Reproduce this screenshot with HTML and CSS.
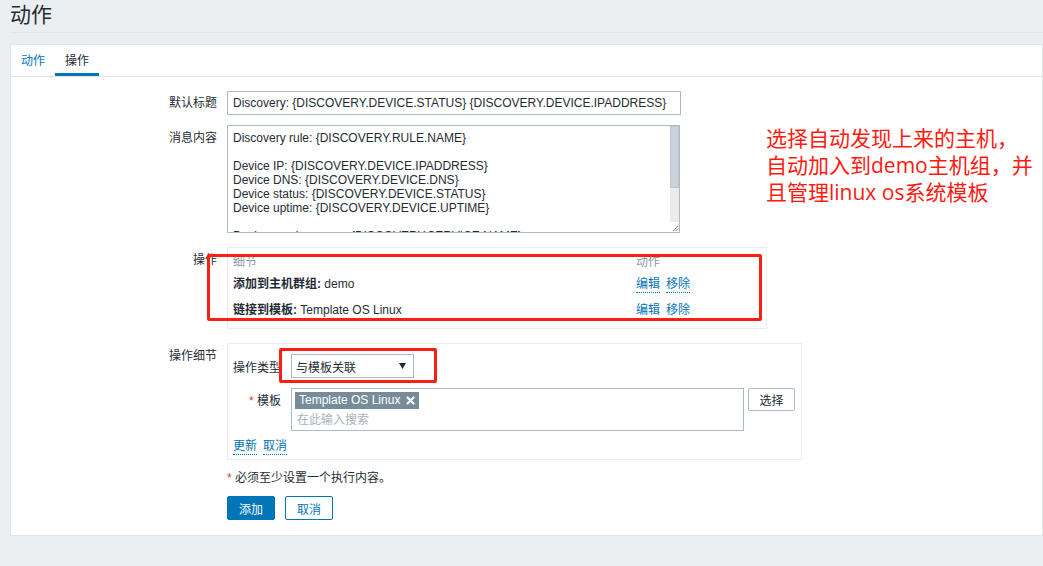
FILE: index.html
```html
<!DOCTYPE html>
<html lang="zh">
<head>
<meta charset="utf-8">
<title>动作</title>
<link rel="stylesheet" href="styles.css">
</head>
<body>
<div class="page">
  <header class="page-header"><h1>动作</h1></header>
  <main class="card">
    <ul class="tabs">
      <li class="tab">动作</li>
      <li class="tab active">操作</li>
    </ul>
    <div class="form">
      <div class="row r1">
        <label class="lbl">默认标题</label>
        <div class="ctl"><input class="text-input" type="text" value="Discovery: {DISCOVERY.DEVICE.STATUS} {DISCOVERY.DEVICE.IPADDRESS}"></div>
      </div>
      <div class="row r2">
        <label class="lbl">消息内容</label>
        <div class="ctl">
          <div class="textarea">
            <textarea class="ta">Discovery rule: {DISCOVERY.RULE.NAME}

Device IP: {DISCOVERY.DEVICE.IPADDRESS}
Device DNS: {DISCOVERY.DEVICE.DNS}
Device status: {DISCOVERY.DEVICE.STATUS}
Device uptime: {DISCOVERY.DEVICE.UPTIME}

Device service name: {DISCOVERY.SERVICE.NAME}</textarea>
            <div class="scrollbar">
              <div class="thumb"></div>
              <div class="track"></div>
              <div class="corner">
                <svg width="7" height="7" viewBox="0 0 7 7"><path d="M6 1 L1 6 M6 3.5 L3.5 6" stroke="#7a7a7a" stroke-width="1" fill="none"/></svg>
              </div>
            </div>
          </div>
        </div>
      </div>
      <div class="row r3">
        <label class="lbl">操作</label>
        <div class="ctl">
          <div class="box ops">
            <div class="ops-head"><span>细节</span><span>动作</span></div>
            <div class="ops-row"><span><b>添加到主机群组:</b> demo</span><span class="acts"><a class="link">编辑</a><a class="link">移除</a></span></div>
            <div class="ops-row"><span><b>链接到模板:</b> Template OS Linux</span><span class="acts"><a class="link">编辑</a><a class="link">移除</a></span></div>
          </div>
        </div>
      </div>
      <div class="row r4">
        <label class="lbl">操作细节</label>
        <div class="ctl">
          <div class="box details">
            <div class="drow drow-type">
              <span class="dlbl">操作类型</span>
              <div class="select"><span class="sel-text">与模板关联</span><svg class="arrow" width="7" height="6" viewBox="0 0 7 6"><polygon points="0,0 7,0 3.5,6" fill="#1f2c33"/></svg></div>
            </div>
            <div class="drow drow-tpl">
              <span class="dlbl"><span class="req">*</span> 模板</span>
              <div class="ms-wrap">
                <div class="multiselect">
                  <span class="tag">Template OS Linux<svg class="tag-x" width="9" height="9" viewBox="0 0 9 9"><path d="M1.5 1.5 L7.5 7.5 M7.5 1.5 L1.5 7.5" stroke="#fff" stroke-width="2.2" stroke-linecap="round"/></svg></span>
                  <span class="placeholder">在此输入搜索</span>
                </div>
                <button class="btn-alt" type="button">选择</button>
              </div>
            </div>
            <div class="dlinks"><a class="link">更新</a><a class="link">取消</a></div>
          </div>
        </div>
      </div>
      <div class="row r5">
        <span class="lbl"></span>
        <div class="ctl note"><span class="req">*</span> 必须至少设置一个执行内容。</div>
      </div>
      <div class="row r6">
        <span class="lbl"></span>
        <div class="ctl buttons">
          <button class="btn-primary" type="button">添加</button>
          <button class="btn-outline" type="button">取消</button>
        </div>
      </div>
    </div>
  </main>
  <div class="mark mark-ops"></div>
  <div class="mark mark-type"></div>
  <div class="annotation">
    <span class="aline">选择自动发现上来的主机，</span>
    <span class="aline">自动加入到demo主机组，并</span>
    <span class="aline">且管理linux os系统模板</span>
  </div>
</div>
</body>
</html>
```

FILE: styles.css
```css
* { box-sizing: border-box; }
html, body { margin: 0; padding: 0; }
body {
  background: #ebeef0;
  font-family: "Liberation Sans", "Noto Sans CJK SC", sans-serif;
  font-size: 12px;
  color: #1f2c33;
  width: 1043px;
  height: 566px;
  overflow: hidden;
}
.page { position: relative; width: 1043px; height: 566px; }

.page-header {
  margin-left: 10px;
  height: 33px;
  border-bottom: 1px solid #dfe4e7;
}
.page-header h1 {
  margin: 0;
  font-size: 21px;
  font-weight: normal;
  line-height: 30px;
  color: #1f2c33;
  font-family: "Liberation Sans", "Noto Sans CJK SC", sans-serif;
}

.card {
  margin: 11px 0 0 10px;
  width: 1033px;
  height: 492px;
  background: #fff;
  border: 1px solid #dfe4e7;
}

.tabs {
  list-style: none;
  margin: 0;
  padding: 0;
  display: flex;
  height: 32px;
  border-bottom: 1px solid #dfe4e7;
}
.tab {
  padding: 3px 10px 0;
  height: 31px;
  line-height: 26px;
  border-bottom: 3px solid transparent;
  color: #0275b8;
}
.tab.active {
  color: #1f2c33;
  border-bottom-color: #0275b8;
}

.form { padding-top: 14px; }
.row { display: flex; gap: 10px; }
.lbl {
  width: 206px;
  flex: none;
  text-align: right;
  padding-top: 5px;
  line-height: 14px;
}
.ctl { flex: none; }
.r1 { margin-bottom: 10px; }
.r1 .lbl { padding-top: 5px; }
.r2 { margin-bottom: 14px; }
.r2 .lbl { padding-top: 6px; }
.r3 { margin-bottom: 14px; }
.r3 .lbl { padding-top: 6px; }
.r4 { margin-bottom: 11px; }
.r4 .lbl { padding-top: 6px; }
.r5 { margin-bottom: 11px; line-height: 14px; }
.r5 .lbl { padding: 0; }

.text-input {
  width: 454px;
  height: 24px;
  border: 1px solid #acbbc2;
  padding: 0 5px;
  font: inherit;
  color: #1f2c33;
  background: #fff;
  outline: none;
}

.textarea {
  width: 453px;
  height: 108px;
  border: 1px solid #acbbc2;
  display: flex;
  background: #fff;
}
.ta {
  flex: 1;
  border: none;
  resize: none;
  overflow: hidden;
  padding: 5px 5px 0;
  font: inherit;
  line-height: 14px;
  color: #1f2c33;
  outline: none;
  white-space: pre;
}
.scrollbar {
  width: 9px;
  display: flex;
  flex-direction: column;
}
.thumb { height: 62px; background: #c9d3d9; border: 1px solid #b9c5cc; }
.track { flex: 1; background: #ebebeb; }
.corner {
  height: 10px;
  background: #fff;
  display: flex;
  align-items: flex-end;
  justify-content: flex-end;
}
.corner svg { display: block; }

.box {
  background: #fff;
  border: 1px solid #ebeef0;
}
.ops {
  width: 540px;
  height: 82px;
  padding: 3px 5px 0;
}
.ops-head, .ops-row {
  display: grid;
  grid-template-columns: 1fr 125px;
  line-height: 14px;
}
.ops-head { height: 20px; padding-top: 4px; color: #8d9aa2; }
.ops-row { height: 26px; padding-top: 5.5px; }
.ops-row b { font-weight: bold; }
.acts { display: flex; gap: 6px; }
.link {
  color: #0275b8;
  border-bottom: 1px dotted #0275b8;
  line-height: 14px;
  height: 16px;
  display: inline-block;
}

.details {
  width: 575px;
  height: 117px;
  padding: 10px 5px 0;
}
.drow { display: flex; gap: 10px; }
.dlbl {
  width: 48px;
  flex: none;
  text-align: right;
  white-space: nowrap;
  line-height: 14px;
}
.drow-type { align-items: center; height: 24px; margin-bottom: 10px; }
.drow-type .dlbl { padding-top: 3px; }
.drow-tpl .dlbl { padding-top: 6px; }
.req { color: #e33734; }
.select {
  width: 123px;
  height: 24px;
  border: 1px solid #acbbc2;
  display: flex;
  align-items: center;
  justify-content: space-between;
  padding: 0 7px 0 4px;
  line-height: 14px;
}
.sel-text { padding-top: 3px; }
.arrow { display: block; }
.ms-wrap { display: flex; gap: 4px; align-items: flex-start; }
.multiselect {
  width: 453px;
  height: 43px;
  border: 1px solid #acbbc2;
  padding: 3px 3px 0;
  display: flex;
  flex-direction: column;
  align-items: flex-start;
}
.tag {
  background: #768d99;
  color: #fff;
  height: 17px;
  line-height: 17px;
  padding: 0 4px;
  display: inline-flex;
  align-items: center;
  gap: 6px;
  font-size: 12px;
}
.tag-x { display: block; }
.placeholder {
  color: #a8b3ba;
  line-height: 14px;
  margin-top: 4px;
  padding-left: 2px;
}
.btn-alt {
  width: 47px;
  height: 23px;
  border: 1px solid #acbbc2;
  background: #fff;
  color: #1f2c33;
  font: inherit;
  padding: 0;
  border-radius: 2px;
}
.dlinks { display: flex; gap: 6px; margin-top: 8px; }

.note { line-height: 14px; }
.buttons { display: flex; gap: 10px; }
.btn-primary, .btn-outline {
  height: 24px;
  width: 48px;
  font: inherit;
  padding: 0;
  border-radius: 2px;
}
.btn-primary {
  background: #0275b8;
  color: #fff;
  border: 1px solid #0275b8;
}
.btn-outline {
  background: #fff;
  color: #0275b8;
  border: 1px solid #0275b8;
}

.mark {
  position: absolute;
  border: 3px solid #fa1e14;
  border-radius: 2px;
}
.mark-ops { left: 207px; top: 254px; width: 555px; height: 67px; }
.mark-type { left: 279px; top: 348px; width: 158px; height: 35px; }

.annotation {
  position: absolute;
  left: 766px;
  top: 125px;
  color: #ff1a10;
  font-family: "Open Sans", "Noto Sans CJK SC", sans-serif;
  font-size: 21px;
  line-height: 27px;
}
.aline { display: block; white-space: nowrap; }
```
